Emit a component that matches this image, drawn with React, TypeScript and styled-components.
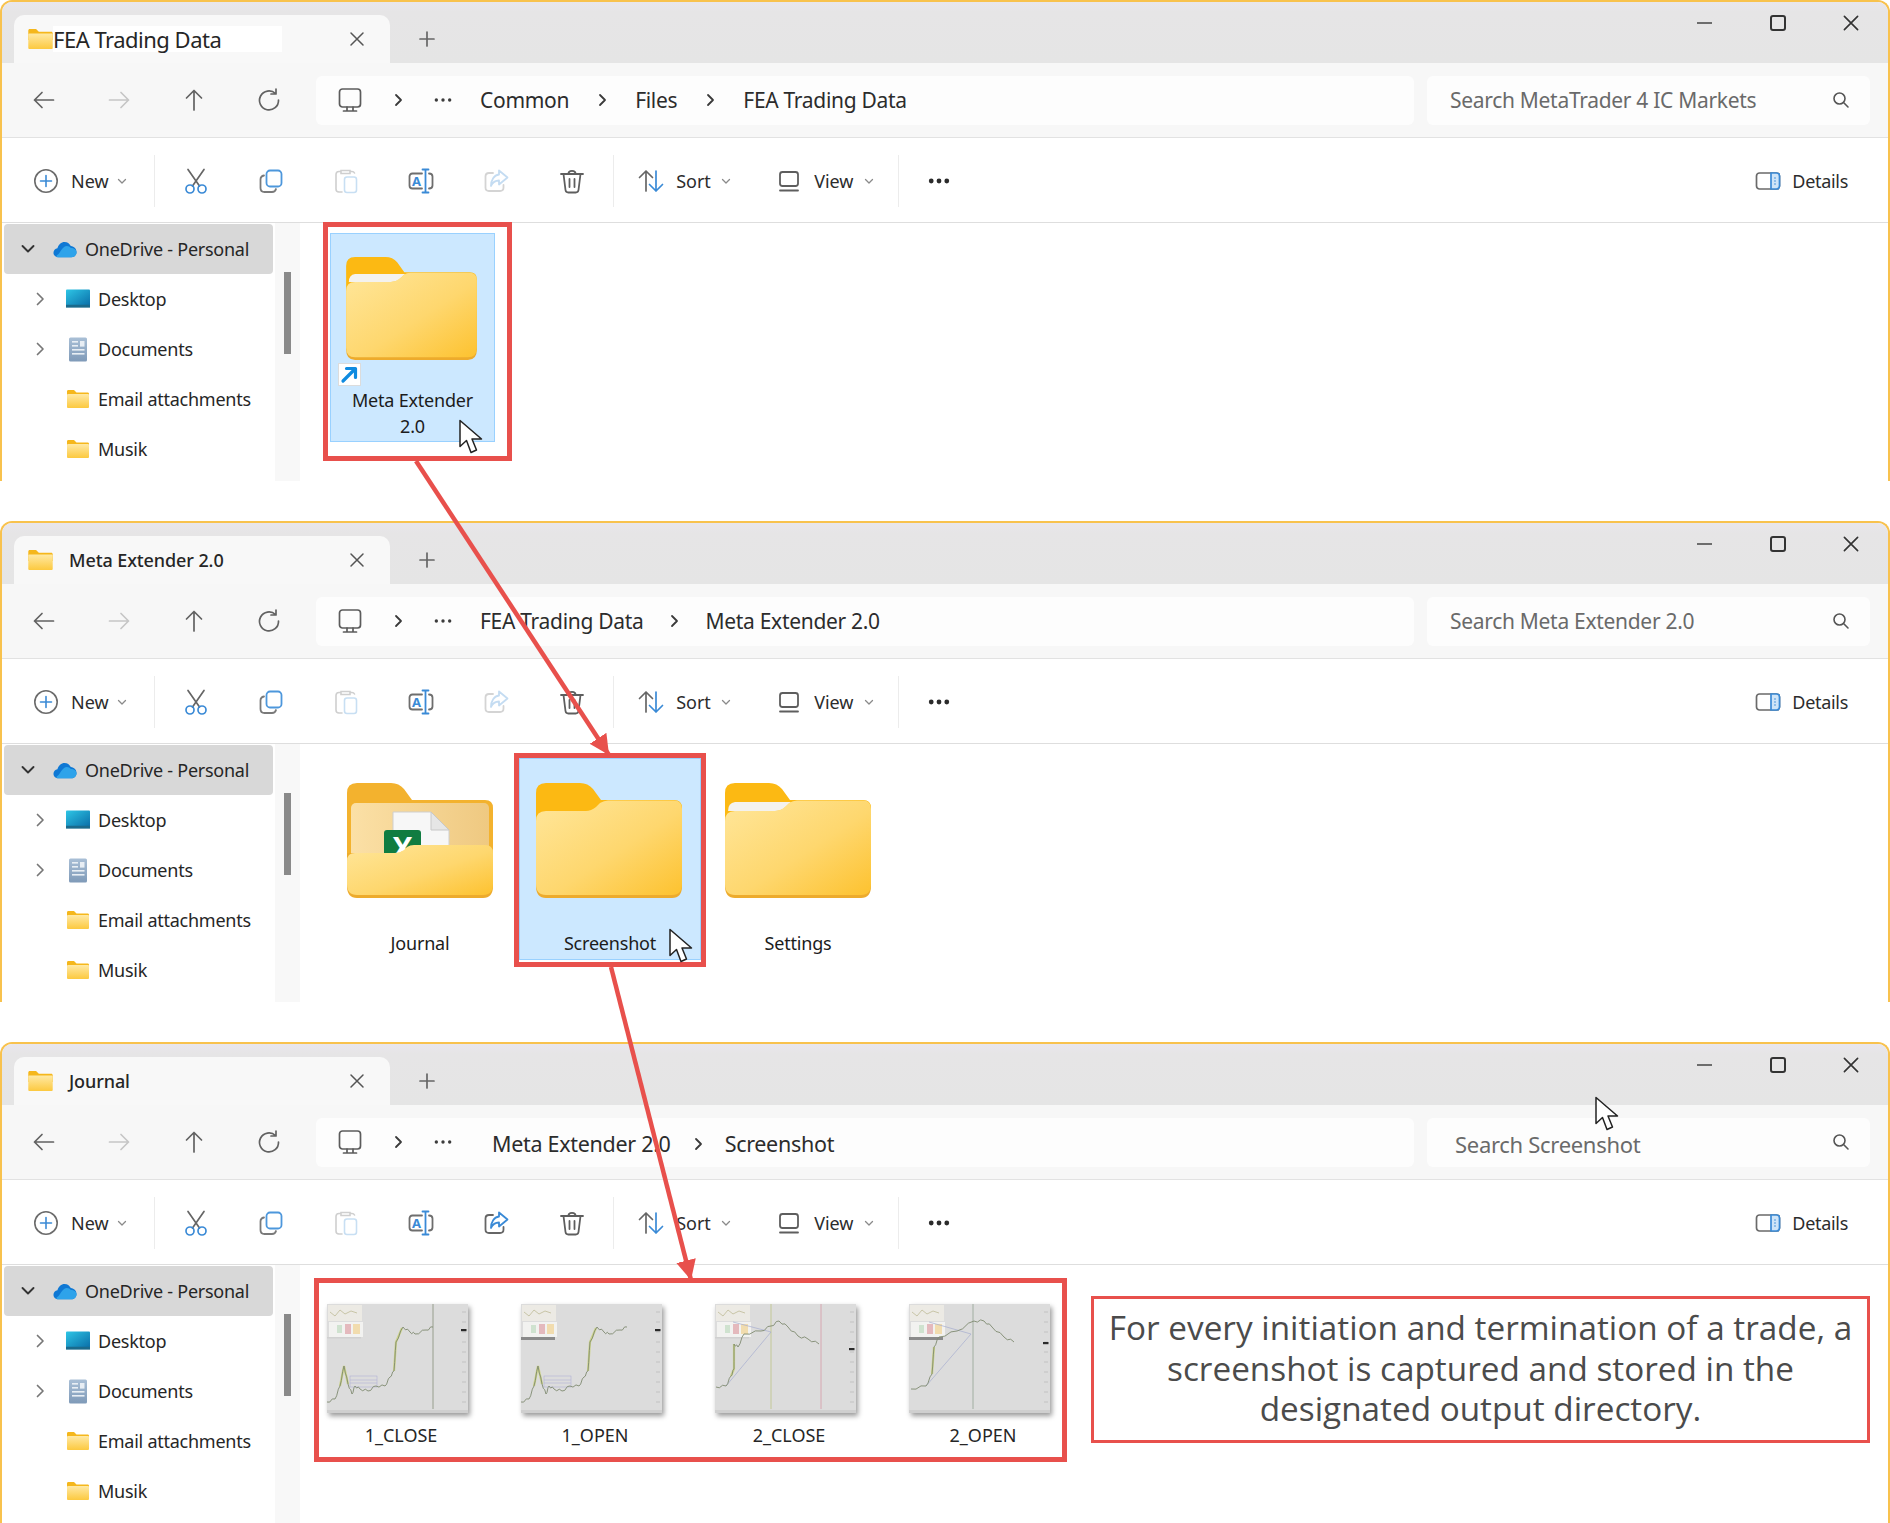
import React from 'react';
import styled, { createGlobalStyle } from 'styled-components';

const RED = '#e8504c';
const UI_FONT = '"Noto Sans", "Open Sans", "Liberation Sans", sans-serif';

const GlobalStyle = createGlobalStyle`
  html, body {
    margin: 0;
    padding: 0;
    background: #fff;
  }
  body {
    font-family: ${UI_FONT};
    color: #2a2a2a;
  }
`;

const Page = styled.div`
  position: relative;
  width: 1890px;
  height: 1523px;
  display: flex;
  flex-direction: column;
  gap: 40px;
  overflow: hidden;
  background: #fff;
`;

const ArrowLayer = styled.svg`
  position: absolute;
  inset: 0;
  z-index: 5;
  pointer-events: none;
`;

const Window = styled.section`
  position: relative;
  box-sizing: border-box;
  height: 481px;
  flex-shrink: 0;
  display: flex;
  flex-direction: column;
  overflow: hidden;
  border: 2px solid #f8c24e;
  border-bottom: 0;
  border-radius: 12px 12px 0 0;
  background: #fff;
`;

const TabStrip = styled.header`
  height: 61px;
  flex-shrink: 0;
  display: flex;
  background: linear-gradient(#e9e6ec 0, #e6e5e6 10px, #e5e5e5 100%);
`;

const Tab = styled.div`
  box-sizing: border-box;
  width: 376px;
  height: 48px;
  margin: 13px 0 0 12px;
  padding-left: 14px;
  display: flex;
  align-items: center;
  background: #f8f8f8;
  border-radius: 10px 10px 0 0;
`;

const TabTitle = styled.span<{ $pasted?: boolean }>`
  flex: 1;
  font-size: ${(p) => (p.$pasted ? '22px' : '18px')};
  font-weight: ${(p) => (p.$pasted ? 400 : 500)};
  letter-spacing: ${(p) => (p.$pasted ? '-0.5px' : '-0.1px')};
  color: #262626;
  white-space: nowrap;
  margin-left: ${(p) => (p.$pasted ? '0' : '16px')};
`;

const PastedLabel = styled.span`
  display: inline-block;
  width: 229px;
  height: 26px;
  line-height: 26px;
  background: #fff;
`;

const TabClose = styled.span`
  width: 20px;
  height: 20px;
  margin-right: 23px;
  display: flex;
`;

const NewTab = styled.span`
  margin: 13px 0 0 27px;
  height: 48px;
  display: flex;
  align-items: center;
`;

const WindowControls = styled.div`
  margin-left: auto;
  padding-right: 1px;
  display: flex;
`;

const WindowButton = styled.span`
  width: 73px;
  height: 42px;
  display: flex;
  align-items: center;
  justify-content: center;
`;

const NavBar = styled.nav`
  box-sizing: border-box;
  height: 75px;
  flex-shrink: 0;
  padding-left: 4px;
  display: flex;
  align-items: center;
  background: #f7f7f7;
  border-bottom: 1px solid #e2e2e2;
`;

const NavButton = styled.span`
  width: 75px;
  display: flex;
  justify-content: center;
`;

const AddressBar = styled.div`
  box-sizing: border-box;
  width: 1098px;
  height: 49px;
  margin-left: 10px;
  padding-left: 20px;
  display: flex;
  align-items: center;
  background: #fdfdfd;
  border-radius: 6px;
`;

const AddressChevron = styled.span`
  margin-left: 25px;
  display: flex;
`;

const AddressMore = styled.span`
  margin-left: 24px;
  width: 24px;
  display: flex;
  justify-content: center;
`;

const Crumbs = styled.div<{ $lead: number; $gap: number; $large?: boolean }>`
  margin-left: ${(p) => p.$lead}px;
  padding-top: ${(p) => (p.$large ? '3px' : '0')};
  display: flex;
  align-items: center;
  gap: ${(p) => p.$gap}px;
  font-size: ${(p) => (p.$large ? '21.5px' : '21px')};
  letter-spacing: -0.3px;
  color: #2c2c2c;
  white-space: nowrap;
`;

const SearchBox = styled.div`
  box-sizing: border-box;
  width: 443px;
  height: 49px;
  margin-left: 13px;
  display: flex;
  align-items: center;
  justify-content: space-between;
  background: #fdfdfd;
  border-radius: 6px;
`;

const SearchText = styled.span<{ $inset: number; $large?: boolean }>`
  padding-left: ${(p) => p.$inset}px;
  padding-top: ${(p) => (p.$large ? '3px' : '0')};
  font-size: ${(p) => (p.$large ? '22px' : '21px')};
  letter-spacing: -0.3px;
  color: #6a6a6a;
  white-space: nowrap;
`;

const SearchGlyph = styled.span`
  margin-right: 19px;
  display: flex;
`;

const Toolbar = styled.div`
  box-sizing: border-box;
  height: 85px;
  flex-shrink: 0;
  padding-top: 2px;
  display: flex;
  align-items: center;
  background: #fff;
  border-bottom: 1px solid #dedede;
`;

const TextTool = styled.div<{ $width: number; $inset: number; $gap?: number; $caretPull?: number }>`
  box-sizing: border-box;
  width: ${(p) => p.$width}px;
  padding-left: ${(p) => p.$inset}px;
  flex-shrink: 0;
  display: flex;
  align-items: center;
  gap: ${(p) => p.$gap ?? 11}px;
  font-size: 18px;
  letter-spacing: 0;
  color: #2c2c2c;

  svg:last-child {
    margin-left: -${(p) => p.$caretPull ?? 0}px;
  }
`;

const IconTool = styled.span<{ $width?: number }>`
  width: ${(p) => p.$width ?? 75.2}px;
  flex-shrink: 0;
  display: flex;
  justify-content: center;
`;

const ToolDivider = styled.span<{ $before?: number; $after?: number }>`
  width: 1px;
  height: 52px;
  flex-shrink: 0;
  margin-left: ${(p) => p.$before ?? 0}px;
  margin-right: ${(p) => p.$after ?? 0}px;
  background: #ececec;
`;

const DetailsTool = styled.div`
  margin-left: auto;
  padding-right: 40px;
  display: flex;
  align-items: center;
  gap: 11px;
  font-size: 18px;
  letter-spacing: -0.3px;
  color: #2c2c2c;
`;

const Body = styled.div`
  flex: 1;
  min-height: 0;
  display: flex;
`;

const Sidebar = styled.aside`
  width: 273px;
  padding: 1px 0 0 2px;
  box-sizing: border-box;
  flex-shrink: 0;
  overflow: hidden;
`;

const SideRow = styled.div<{ $selected?: boolean; $inset: number }>`
  box-sizing: border-box;
  width: 269px;
  height: 50px;
  padding-left: ${(p) => p.$inset}px;
  display: flex;
  align-items: center;
  gap: 8px;
  font-size: 18px;
  letter-spacing: -0.25px;
  color: #262626;
  white-space: nowrap;
  border-radius: 4px;
  background: ${(p) => (p.$selected ? '#d8d8d8' : 'transparent')};
`;

const Twisty = styled.span<{ $after: number }>`
  width: 16px;
  height: 16px;
  flex-shrink: 0;
  margin-right: ${(p) => p.$after}px;
  display: flex;
`;

const SideIcon = styled.span`
  width: 24px;
  flex-shrink: 0;
  display: flex;
  justify-content: center;
`;

const Gutter = styled.div`
  width: 25px;
  flex-shrink: 0;
  background: #f8f8f8;
`;

const ScrollThumb = styled.div`
  width: 7px;
  height: 82px;
  margin: 49px 0 0 9px;
  background: #8a8a8a;
`;

const Content = styled.main<{ $inset: number }>`
  flex: 1;
  min-width: 0;
  padding-left: ${(p) => p.$inset}px;
  display: flex;
  align-items: flex-start;
`;

const RedFrame = styled.div<{ $mt: number; $pad: string; $ml?: number; $mr?: number; $width?: number; $height?: number }>`
  box-sizing: border-box;
  flex-shrink: 0;
  width: ${(p) => (p.$width ? `${p.$width}px` : 'auto')};
  height: ${(p) => (p.$height ? `${p.$height}px` : 'auto')};
  margin: ${(p) => p.$mt}px ${(p) => p.$mr ?? 0}px 0 ${(p) => p.$ml ?? 0}px;
  padding: ${(p) => p.$pad};
  border: 5px solid ${RED};
`;

const Tile = styled.div<{ $width: number; $height: number; $top: number; $selected?: boolean; $mt?: number }>`
  position: relative;
  box-sizing: border-box;
  width: ${(p) => p.$width}px;
  height: ${(p) => p.$height}px;
  margin-top: ${(p) => p.$mt ?? 0}px;
  padding-top: ${(p) => p.$top}px;
  flex-shrink: 0;
  display: flex;
  flex-direction: column;
  align-items: center;
  background: ${(p) => (p.$selected ? '#cce8ff' : 'transparent')};
  border: 1px solid ${(p) => (p.$selected ? '#99d1ff' : 'transparent')};
`;

const FolderSlot = styled.span<{ $shift?: number }>`
  display: flex;
  margin-left: ${(p) => p.$shift ?? 0}px;
`;

const TileLabel = styled.div<{ $gap: number }>`
  margin-top: ${(p) => p.$gap}px;
  font-size: 18px;
  line-height: 26px;
  letter-spacing: -0.2px;
  text-align: center;
  color: #1c1c1c;
`;

const ShortcutBadge = styled.span`
  position: absolute;
  left: 7px;
  top: 129px;
  width: 23px;
  height: 23px;
  display: flex;
  background: #fff;
  border: 1px solid #dcdcdc;
  box-sizing: border-box;
`;

const CursorSpot = styled.span<{ $left: number; $top: number }>`
  position: absolute;
  left: ${(p) => p.$left}px;
  top: ${(p) => p.$top}px;
  display: flex;
  z-index: 6;
`;

const ThumbRow = styled.div`
  display: flex;
  gap: 53px;
`;

const ThumbItem = styled.div`
  width: 141px;
`;

const ThumbChart = styled.svg`
  display: block;
  width: 141px;
  height: 109px;
  box-shadow: 2px 3px 5px rgba(0, 0, 0, 0.4);
`;

const ThumbLabel = styled.div`
  margin-top: 9px;
  padding-left: 7px;
  font-size: 18px;
  line-height: 26px;
  letter-spacing: 0;
  text-align: center;
  color: #262626;
`;

const Note = styled.p`
  box-sizing: border-box;
  width: 779px;
  height: 147px;
  margin: 31px 0 0 24px;
  padding-top: 8px;
  flex-shrink: 0;
  border: 3px solid ${RED};
  font-family: 'Open Sans', sans-serif;
  font-size: 33.3px;
  line-height: 40.5px;
  text-align: center;
  color: #4b4b4b;
`;

/* ---- icons ---- */

type IconProps = { size?: number; color?: string };

const Line = ({ size = 28, color = '#626262', d }: IconProps & { d: string }) => (
  <svg width={size} height={size} viewBox="0 0 28 28" fill="none" stroke={color} strokeWidth={1.7} strokeLinecap="round" strokeLinejoin="round">
    <path d={d} />
  </svg>
);

const BackIcon = () => <Line d="M23.5 14H4.5M12 6.5L4.5 14L12 21.5" />;
const ForwardIcon = () => <Line color="#c6c6c6" d="M4.5 14H23.5M16 6.5L23.5 14L16 21.5" />;
const UpIcon = () => <Line d="M14 24V4.5M6.5 12L14 4.5L21.5 12" />;
const RefreshIcon = () => <Line d="M20.5 7.5A9.5 9.5 0 1 0 23.5 14M21 3V8H16" />;
const Chevron = () => (
  <svg width={18} height={18} viewBox="0 0 18 18" fill="none" stroke="#3a3a3a" strokeWidth={1.8} strokeLinecap="round" strokeLinejoin="round">
    <path d="M7 4L12 9L7 14" />
  </svg>
);
const CloseIcon = ({ size = 20, color = '#555' }: IconProps) => (
  <svg width={size} height={size} viewBox="0 0 20 20" fill="none" stroke={color} strokeWidth={1.5} strokeLinecap="round">
    <path d="M4 4L16 16M16 4L4 16" />
  </svg>
);
const PlusIcon = () => (
  <svg width={20} height={20} viewBox="0 0 20 20" fill="none" stroke="#666" strokeWidth={1.7} strokeLinecap="round">
    <path d="M10 3V17M3 10H17" />
  </svg>
);
const MinimizeIcon = () => (
  <svg width={18} height={18} viewBox="0 0 18 18" fill="none" stroke="#444" strokeWidth={1.6}>
    <path d="M1 9H16" />
  </svg>
);
const MaximizeIcon = () => (
  <svg width={18} height={18} viewBox="0 0 18 18" fill="none" stroke="#333" strokeWidth={2}>
    <rect x="2" y="2" width="14" height="14" rx="2" />
  </svg>
);
const Dots = ({ size = 24, r = 1.7, color = '#3c3c3c' }: { size?: number; r?: number; color?: string }) => (
  <svg width={size} height={8} viewBox={`0 0 ${size} 8`} fill={color}>
    <circle cx={size / 2 - size / 3.6} cy="4" r={r} />
    <circle cx={size / 2} cy="4" r={r} />
    <circle cx={size / 2 + size / 3.6} cy="4" r={r} />
  </svg>
);
const MonitorIcon = () => (
  <svg width={28} height={28} viewBox="0 0 28 28" fill="none" stroke="#5c5c5c" strokeWidth={1.7} strokeLinecap="round" strokeLinejoin="round">
    <rect x="3.5" y="3" width="21" height="18" rx="3" />
    <path d="M11 21V24.5M17 21V24.5M7.5 25H20.5" />
  </svg>
);
const SearchIcon = () => (
  <svg width={20} height={20} viewBox="0 0 20 20" fill="none" stroke="#555" strokeWidth={1.6} strokeLinecap="round">
    <circle cx="8.5" cy="8.5" r="5.5" />
    <path d="M12.8 12.8L17 17" />
  </svg>
);
const NewIcon = () => (
  <svg width={26} height={26} viewBox="0 0 26 26" fill="none" strokeWidth={1.6} strokeLinecap="round">
    <circle cx="13" cy="13" r="11.2" stroke="#6b6b6b" />
    <path d="M13 7.5V18.5M7.5 13H18.5" stroke="#3a8ad6" />
  </svg>
);
const CaretDown = () => (
  <svg width={12} height={12} viewBox="0 0 12 12" fill="none" stroke="#8a8a8a" strokeWidth={1.3} strokeLinecap="round" strokeLinejoin="round">
    <path d="M2.5 4.5L6 8L9.5 4.5" />
  </svg>
);
const CutIcon = () => (
  <svg width={28} height={28} viewBox="0 0 28 28" fill="none" strokeWidth={1.7} strokeLinecap="round">
    <path d="M6 2.5L17.5 19M22 2.5L10.5 19" stroke="#666" />
    <circle cx="8" cy="22" r="4" stroke="#3a8ad6" />
    <circle cx="20" cy="22" r="4" stroke="#3a8ad6" />
  </svg>
);
const CopyIcon = () => (
  <svg width={28} height={28} viewBox="0 0 28 28" fill="none" strokeWidth={1.8} strokeLinecap="round">
    <path d="M7 8.5C4.5 9 3.5 10.5 3.5 12.5V21C3.5 23.5 5 25 7.5 25H15C17 25 18.5 24 19 22" stroke="#7a7a7a" />
    <rect x="9.5" y="3.5" width="15" height="16" rx="3.5" stroke="#4d97dc" />
  </svg>
);
const PasteIcon = () => (
  <svg width={28} height={28} viewBox="0 0 28 28" fill="none" strokeWidth={1.6} strokeLinecap="round">
    <path d="M9 4.5H7C5 4.5 4 6 4 7.5V22C4 24 5 25 7 25H10M18 4.5H20C21 4.5 22 5 22.5 6M9 3.5H18V6.5H9Z" stroke="#cfcfcf" />
    <rect x="12.5" y="10" width="12" height="15.5" rx="2.5" stroke="#c8dff3" />
  </svg>
);
const RenameIcon = () => (
  <svg width={28} height={28} viewBox="0 0 28 28" fill="none" strokeWidth={1.8} strokeLinecap="round">
    <path d="M15 6.5H5.5C3.5 6.5 2.5 8 2.5 9.5V18.5C2.5 20 3.5 21.5 5.5 21.5H15M22 6.5C24.5 6.5 25.5 8 25.5 9.5V18.5C25.5 20 24.5 21.5 22 21.5" stroke="#6e6e6e" />
    <path d="M18.5 3V25M15.5 2.5H21.5M15.5 25.5H21.5" stroke="#3a8ad6" />
    <text x="9.6" y="18.6" textAnchor="middle" fontSize="13" fontWeight="700" fontFamily="Noto Sans, sans-serif" fill="#3a8ad6" stroke="none">A</text>
  </svg>
);
const ShareIcon = ({ dim }: { dim: boolean }) => (
  <svg width={28} height={28} viewBox="0 0 28 28" fill="none" strokeWidth={1.8} strokeLinecap="round" strokeLinejoin="round">
    <path d="M11 6H7C5 6 3.5 7.5 3.5 9.5V20.5C3.5 22.5 5 24 7 24H18C20 24 21.5 22.5 21.5 20.5V18" stroke={dim ? '#d4d4d4' : '#666'} />
    <path d="M17 3.5L25.5 10.5L17 17.5V13.5C13 13.5 10.5 15.5 9 19C9 13 12 8 17 7.5Z" stroke={dim ? '#c4dcf2' : '#3a8ad6'} />
  </svg>
);
const TrashIcon = () => (
  <svg width={28} height={28} viewBox="0 0 28 28" fill="none" stroke="#5e5e5e" strokeWidth={1.8} strokeLinecap="round" strokeLinejoin="round">
    <path d="M3 7H25M10.5 6.5C10.5 3 17.5 3 17.5 6.5M5.5 7L7.5 23C7.7 24.5 8.8 25.5 10.3 25.5H17.7C19.2 25.5 20.3 24.5 20.5 23L22.5 7M11.5 12V20M16.5 12V20" />
  </svg>
);
const SortIcon = () => (
  <svg width={28} height={28} viewBox="0 0 28 28" fill="none" strokeWidth={1.7} strokeLinecap="round" strokeLinejoin="round">
    <path d="M9 24V4M2.5 10.5L9 4L15.5 10.5" stroke="#666" />
    <path d="M19 4V24M12.5 17.5L19 24L25.5 17.5" stroke="#3a8ad6" />
  </svg>
);
const ViewIcon = () => (
  <svg width={24} height={24} viewBox="0 0 24 24" fill="none" stroke="#5e5e5e" strokeWidth={1.8} strokeLinecap="round">
    <rect x="3" y="3" width="18" height="14" rx="2.5" />
    <path d="M3 21.5H21" />
  </svg>
);
const DetailsIcon = () => (
  <svg width={26} height={22} viewBox="0 0 26 22" fill="none" strokeWidth={1.7}>
    <rect x="1.5" y="3" width="23" height="16" rx="3" stroke="#6a6a6a" />
    <path d="M16 3H21.5C23.2 3 24.5 4.3 24.5 6V16C24.5 17.7 23.2 19 21.5 19H16Z" fill="#cfe5f8" stroke="#3a8ad6" />
    <path d="M20 7.5V8.5M20 10.5V11.5M20 13.5V14.5" stroke="#3a8ad6" />
  </svg>
);
const SideChevron = () => (
  <svg width={16} height={16} viewBox="0 0 16 16" fill="none" stroke="#777" strokeWidth={1.7} strokeLinecap="round" strokeLinejoin="round">
    <path d="M5.5 2.5L11 8L5.5 13.5" />
  </svg>
);
const SideChevronDown = () => (
  <svg width={16} height={16} viewBox="0 0 16 16" fill="none" stroke="#333" strokeWidth={1.9} strokeLinecap="round" strokeLinejoin="round">
    <path d="M2.5 5L8 10.5L13.5 5" />
  </svg>
);
const CloudIcon = () => (
  <svg width={27} height={19} viewBox="0 0 26 18">
    <path d="M6 17.5C2.5 17.5 0.5 15 0.5 12.5C0.5 10 2.3 8 4.8 7.6C5.8 3.5 9 0.8 12.5 0.8C15.5 0.8 18 2.5 19.3 5.2C23 5.5 25.5 8.5 25.5 11.7C25.5 15 23 17.5 19.8 17.5Z" fill="#0f78d4" />
    <path d="M12 6.2C14 4.6 18 5 19.3 7.5C23 7.6 25.5 9.5 25.5 12.2C25.5 15 23 17.5 19.8 17.5H6C3 17.5 3 16 6 14C8 11.5 9.5 8 12 6.2Z" fill="#2ea3ea" />
  </svg>
);
const DesktopIcon = () => (
  <svg width={25} height={20} viewBox="0 0 25 20">
    <defs>
      <linearGradient id="desk" x1="0" y1="0" x2="1" y2="1">
        <stop offset="0" stopColor="#2ec6e6" />
        <stop offset="1" stopColor="#0a6ea8" />
      </linearGradient>
    </defs>
    <rect x="0" y="0" width="25" height="17" rx="1" fill="url(#desk)" />
    <rect x="0" y="16" width="25" height="3" fill="#1a6a8c" />
  </svg>
);
const DocumentsIcon = () => (
  <svg width={20} height={25} viewBox="0 0 20 25">
    <defs>
      <linearGradient id="docs" x1="0" y1="0" x2="0" y2="1">
        <stop offset="0" stopColor="#a9bfd6" />
        <stop offset="1" stopColor="#7f9ab8" />
      </linearGradient>
    </defs>
    <rect x="1" y="0.5" width="18" height="24" rx="1.5" fill="url(#docs)" />
    <rect x="4" y="4" width="6" height="1.6" fill="#e8eef4" />
    <rect x="4" y="8" width="6" height="1.6" fill="#e8eef4" />
    <rect x="12" y="4" width="4.5" height="5.6" fill="#e8eef4" />
    <rect x="4" y="12" width="12.5" height="1.6" fill="#e8eef4" />
    <rect x="4" y="16" width="12.5" height="1.6" fill="#e8eef4" />
  </svg>
);
const SmallFolder = ({ w = 22, h = 18 }: { w?: number; h?: number }) => (
  <svg width={w} height={h} viewBox="0 0 22 18">
    <path d="M0 1.5C0 0.5 0.5 0 1.5 0H7L9.5 2.5H20.5C21.5 2.5 22 3 22 4V10H0Z" fill="#f5b71c" />
    <rect x="0" y="4" width="22" height="14" rx="1" fill="url(#smallFold)" />
    <defs>
      <linearGradient id="smallFold" x1="0" y1="0" x2="0" y2="1">
        <stop offset="0" stopColor="#ffe9a4" />
        <stop offset="1" stopColor="#fcc93f" />
      </linearGradient>
    </defs>
  </svg>
);

const FolderDefs = () => (
  <defs>
    <linearGradient id="folderFront" x1="0" y1="0" x2="1" y2="1">
      <stop offset="0" stopColor="#ffe69a" />
      <stop offset="0.55" stopColor="#fed76e" />
      <stop offset="1" stopColor="#fdc22f" />
    </linearGradient>
    <linearGradient id="folderInner" x1="0" y1="0" x2="1" y2="0">
      <stop offset="0" stopColor="#fbe0a6" />
      <stop offset="1" stopColor="#efc981" />
    </linearGradient>
  </defs>
);

const FolderBack = 'M0 10Q0 0 10 0H44Q52 0 57 6L65 17H138Q146 17 146 25V70H0Z';
const FolderFront = 'M0 38Q0 28 10 28H50Q55 28 60 24L64 20Q68 17.5 72 17.5H138Q146 17.5 146 26V101Q146 112 136 112H10Q0 112 0 101Z';

const FolderIcon = ({ width, height, paper }: { width: number; height: number; paper?: boolean }) => (
  <svg width={width} height={height} viewBox="0 0 146 115">
    <FolderDefs />
    <path d={FolderBack} fill="#fcb913" />
    <path d="M0 103V60H146V103Q146 115 136 115H10Q0 115 0 103Z" fill="#edab2c" />
    {paper && <path d="M3 28Q3 20 10 19H66L58 26Q55 28 50 28H3Z" fill="#f4f2ee" />}
    <path d={FolderFront} fill="url(#folderFront)" />
  </svg>
);

const FilledFolderIcon = () => (
  <svg width={146} height={115} viewBox="0 0 146 115">
    <FolderDefs />
    <path d={FolderBack} fill="#f3b22e" />
    <rect x="4" y="20" width="138" height="60" rx="5" fill="url(#folderInner)" />
    <path d="M46 29H84L102 47V80H46Z" fill="#f7f7f7" stroke="#cfcfcf" strokeWidth="1" />
    <path d="M84 29V47H102Z" fill="#e6e6e6" stroke="#c8c8c8" strokeWidth="1" />
    <rect x="37" y="47" width="37" height="40" rx="3" fill="#107c41" />
    <text x="55.5" y="76" textAnchor="middle" fontSize="30" fontWeight="700" fontFamily="Open Sans, sans-serif" fill="#fff">X</text>
    <path d="M0 103V70H146V103Q146 115 136 115H10Q0 115 0 103Z" fill="#edab2c" />
    <path d="M0 78Q0 70 8 70H48Q53 70 57 67L60 64Q63 62 67 62H138Q146 62 146 70V101Q146 112 136 112H10Q0 112 0 101Z" fill="url(#folderFront)" />
  </svg>
);

const ShortcutArrow = () => (
  <svg width={21} height={21} viewBox="0 0 21 21" fill="none" stroke="#0f8be0" strokeWidth={3.2} strokeLinecap="round" strokeLinejoin="round">
    <path d="M4 17L16 5M7.5 4.5H16.5V13.5" />
  </svg>
);

const PointerIcon = () => (
  <svg width={25} height={36} viewBox="0 0 25 36">
    <path d="M2 1.5V27.5L8.5 21.5L13 33.5L18.5 31L14 20H23.5Z" fill="#fff" stroke="#222" strokeWidth="1.5" strokeLinejoin="round" />
  </svg>
);

/* ---- chart thumbnails ---- */

type ChartData = {
  line: number[][];
  rises: string[];
  marks: { x: number; color: string }[];
  boxed?: boolean;
  diagonal?: string;
  axisY: number;
  darkPanel?: boolean;
};

// breaks each segment into small zigzags so the price line reads as candles
const jagged = (points: number[][]) =>
  points
    .flatMap(([x, y], i) => {
      const next = points[i + 1];
      if (!next) return [`${x},${y}`];
      return [0, 1, 2].map((k) => {
        const t = k / 3;
        const wobble = k === 0 ? 0 : k % 2 ? 1.1 : -1.1;
        return `${x + (next[0] - x) * t},${y + (next[1] - y) * t + wobble}`;
      });
    })
    .join(' ');

const AXIS_TICKS = [8, 18, 28, 38, 48, 58, 68, 78, 88, 98];

const Thumbnail = ({ chart }: { chart: ChartData }) => (
  <ThumbChart viewBox="0 0 141 109">
    <rect width="141" height="109" fill="#dcdcdc" />
    <rect x="1" y="1" width="34" height="16" fill="#eceae4" />
    <path d="M3 8L8 12L13 6L18 10L24 7L30 9" stroke="#b9b48c" strokeWidth="0.7" fill="none" />
    <rect x="2" y="18" width="34" height="15" fill="#f2f2f0" />
    <rect x="10" y="21" width="5" height="8" fill="#cfe2cf" />
    <rect x="18" y="20" width="6" height="10" fill="#e4b9bd" />
    <rect x="26" y="20" width="7" height="10" fill="#f1dcae" />
    <rect x="0" y="33" width="34" height={chart.darkPanel ? 3 : 1.5} fill={chart.darkPanel ? '#8a8a8a' : '#d0d0d0'} />
    {chart.marks.map((m) => (
      <line key={m.x} x1={m.x} x2={m.x} y1="0" y2="105" stroke={m.color} strokeWidth="0.9" />
    ))}
    {chart.boxed && (
      <g fill="none" stroke="#a8a8d4" strokeWidth="0.5">
        <rect x="23" y="72" width="27" height="11" />
        <path d="M23 76H50M23 79H50" />
      </g>
    )}
    {chart.diagonal && <polyline points={chart.diagonal} fill="none" stroke="#a6aed0" strokeWidth="0.7" />}
    {chart.rises.map((r) => (
      <polyline key={r} points={r} fill="none" stroke="#cdd38a" strokeWidth="2.2" />
    ))}
    <polyline points={jagged(chart.line)} fill="none" stroke="#7f8a70" strokeWidth="0.9" strokeLinejoin="round" />
    <g stroke="#b4b4b4" strokeWidth="0.6">
      {AXIS_TICKS.map((y) => (
        <line key={y} x1="135" x2="139" y1={y} y2={y} />
      ))}
    </g>
    <rect x="134" y={chart.axisY} width="5.5" height="2.2" fill="#2a2a2a" />
    <rect x="0" y="106" width="141" height="3" fill="#cfcfcf" />
  </ThumbChart>
);

const PEAK_LINE = [
  [0, 98], [8, 95], [13, 82], [17, 62], [21, 80], [25, 90], [28, 82], [33, 85], [41, 87], [49, 82],
  [58, 82], [63, 73], [67, 67], [69, 38], [76, 23], [83, 28], [88, 30], [99, 26], [106, 23],
];

const THUMBS: { name: string; chart: ChartData }[] = [
  {
    name: '1_CLOSE',
    chart: {
      line: PEAK_LINE,
      rises: ['13,82 17,62 21,80', '67,67 69,38 75,24'],
      marks: [{ x: 106, color: '#8e9684' }],
      boxed: true,
      axisY: 25,
    },
  },
  {
    name: '1_OPEN',
    chart: {
      line: PEAK_LINE,
      rises: ['13,82 17,62 21,80', '67,67 69,38 75,24'],
      marks: [],
      boxed: true,
      axisY: 25,
      darkPanel: true,
    },
  },
  {
    name: '2_CLOSE',
    chart: {
      line: [[1, 83], [11, 82], [16, 72], [19, 65], [19, 40], [23, 43], [29, 30], [46, 27], [56, 22], [64, 17], [73, 23], [83, 32], [93, 35], [104, 40]],
      rises: ['16,72 19,65 19,40'],
      marks: [
        { x: 56, color: '#bfc58f' },
        { x: 106, color: '#d6a0ac' },
      ],
      diagonal: '11,82 56,28 18,18',
      axisY: 44,
    },
  },
  {
    name: '2_OPEN',
    chart: {
      line: [[2, 85], [17, 82], [23, 70], [25, 43], [30, 33], [48, 27], [65, 17], [75, 17], [83, 23], [95, 33], [105, 38]],
      rises: ['23,70 25,43'],
      marks: [{ x: 64, color: '#9aa89a' }],
      diagonal: '17,82 62,30 20,18',
      axisY: 38,
      darkPanel: true,
    },
  },
];

/* ---- shared chrome ---- */

const SIDE_ITEMS = [
  { name: 'Desktop', icon: <DesktopIcon />, expandable: true },
  { name: 'Documents', icon: <DocumentsIcon />, expandable: true },
  { name: 'Email attachments', icon: <SmallFolder />, expandable: false },
  { name: 'Musik', icon: <SmallFolder />, expandable: false },
];

const SideNav = () => (
  <>
    <Sidebar>
      <SideRow $selected $inset={16}>
        <Twisty $after={9}>
          <SideChevronDown />
        </Twisty>
        <SideIcon>
          <CloudIcon />
        </SideIcon>
        OneDrive - Personal
      </SideRow>
      {SIDE_ITEMS.map((item) => (
        <SideRow key={item.name} $inset={28}>
          <Twisty $after={10}>{item.expandable && <SideChevron />}</Twisty>
          <SideIcon>{item.icon}</SideIcon>
          {item.name}
        </SideRow>
      ))}
    </Sidebar>
    <Gutter>
      <ScrollThumb />
    </Gutter>
  </>
);

type ChromeProps = {
  tabTitle: string;
  pastedTitle?: boolean;
  crumbs: string[];
  crumbLead: number;
  crumbGap: number;
  large?: boolean;
  search: string;
  searchInset: number;
  shareDim: boolean;
  children: React.ReactNode;
};

const ExplorerWindow = ({ tabTitle, pastedTitle, crumbs, crumbLead, crumbGap, large, search, searchInset, shareDim, children }: ChromeProps) => (
  <Window>
    <TabStrip>
      <Tab>
        <SmallFolder w={25} h={20} />
        <TabTitle $pasted={pastedTitle}>{pastedTitle ? <PastedLabel>{tabTitle}</PastedLabel> : tabTitle}</TabTitle>
        <TabClose>
          <CloseIcon />
        </TabClose>
      </Tab>
      <NewTab>
        <PlusIcon />
      </NewTab>
      <WindowControls>
        <WindowButton>
          <MinimizeIcon />
        </WindowButton>
        <WindowButton>
          <MaximizeIcon />
        </WindowButton>
        <WindowButton>
          <CloseIcon size={22} color="#333" />
        </WindowButton>
      </WindowControls>
    </TabStrip>

    <NavBar>
      <NavButton>
        <BackIcon />
      </NavButton>
      <NavButton>
        <ForwardIcon />
      </NavButton>
      <NavButton>
        <UpIcon />
      </NavButton>
      <NavButton>
        <RefreshIcon />
      </NavButton>
      <AddressBar>
        <MonitorIcon />
        <AddressChevron>
          <Chevron />
        </AddressChevron>
        <AddressMore>
          <Dots />
        </AddressMore>
        <Crumbs $lead={crumbLead} $gap={crumbGap} $large={large}>
          {crumbs.map((crumb, i) => (
            <React.Fragment key={crumb}>
              {i > 0 && <Chevron />}
              <span>{crumb}</span>
            </React.Fragment>
          ))}
        </Crumbs>
      </AddressBar>
      <SearchBox>
        <SearchText $inset={searchInset} $large={large}>
          {search}
        </SearchText>
        <SearchGlyph>
          <SearchIcon />
        </SearchGlyph>
      </SearchBox>
    </NavBar>

    <Toolbar>
      <TextTool $width={152} $inset={31} $gap={12} $caretPull={5}>
        <NewIcon />
        New
        <CaretDown />
      </TextTool>
      <ToolDivider $after={3} />
      <IconTool>
        <CutIcon />
      </IconTool>
      <IconTool>
        <CopyIcon />
      </IconTool>
      <IconTool>
        <PasteIcon />
      </IconTool>
      <IconTool>
        <RenameIcon />
      </IconTool>
      <IconTool>
        <ShareIcon dim={shareDim} />
      </IconTool>
      <IconTool>
        <TrashIcon />
      </IconTool>
      <ToolDivider $before={4} />
      <TextTool $width={150} $inset={23} $caretPull={2}>
        <SortIcon />
        Sort
        <CaretDown />
      </TextTool>
      <TextTool $width={134} $inset={13} $gap={13} $caretPull={4}>
        <ViewIcon />
        View
        <CaretDown />
      </TextTool>
      <ToolDivider />
      <IconTool $width={79}>
        <Dots size={28} r={2.4} color="#2b2b2b" />
      </IconTool>
      <DetailsTool>
        <DetailsIcon />
        Details
      </DetailsTool>
    </Toolbar>

    <Body>
      <SideNav />
      {children}
    </Body>
  </Window>
);

export default function App() {
  return (
    <Page>
      <GlobalStyle />

      <ExplorerWindow
        tabTitle="FEA Trading Data"
        pastedTitle
        crumbs={['Common', 'Files', 'FEA Trading Data']}
        crumbLead={25}
        crumbGap={24}
        search="Search MetaTrader 4 IC Markets"
        searchInset={23}
        shareDim
      >
        <Content $inset={23}>
          <RedFrame $mt={-1} $pad="6px 12px 14px 2px">
            <Tile $width={165} $height={209} $top={23} $selected>
              <FolderSlot $shift={-2}>
                <FolderIcon width={131} height={103} paper />
              </FolderSlot>
              <ShortcutBadge>
                <ShortcutArrow />
              </ShortcutBadge>
              <TileLabel $gap={27}>
                Meta Extender
                <br />
                2.0
              </TileLabel>
              <CursorSpot $left={127} $top={185}>
                <PointerIcon />
              </CursorSpot>
            </Tile>
          </RedFrame>
        </Content>
      </ExplorerWindow>

      <ExplorerWindow
        tabTitle="Meta Extender 2.0"
        crumbs={['FEA Trading Data', 'Meta Extender 2.0']}
        crumbLead={25}
        crumbGap={22}
        search="Search Meta Extender 2.0"
        searchInset={23}
        shareDim
      >
        <Content $inset={29}>
          <Tile $width={182} $height={202} $top={24} $mt={14}>
            <FilledFolderIcon />
            <TileLabel $gap={32}>Journal</TileLabel>
          </Tile>
          <RedFrame $mt={9} $pad="0 0 2px 0" $ml={3} $mr={1}>
            <Tile $width={182} $height={202} $top={24} $selected>
              <FolderSlot $shift={-3}>
                <FolderIcon width={146} height={115} />
              </FolderSlot>
              <TileLabel $gap={32}>Screenshot</TileLabel>
              <CursorSpot $left={148} $top={169}>
                <PointerIcon />
              </CursorSpot>
            </Tile>
          </RedFrame>
          <Tile $width={182} $height={202} $top={24} $mt={14}>
            <FolderIcon width={146} height={115} paper />
            <TileLabel $gap={32}>Settings</TileLabel>
          </Tile>
        </Content>
      </ExplorerWindow>

      <ExplorerWindow
        tabTitle="Journal"
        crumbs={['Meta Extender 2.0', 'Screenshot']}
        crumbLead={37}
        crumbGap={18}
        large
        search="Search Screenshot"
        searchInset={28}
        shareDim={false}
      >
        <Content $inset={14}>
          <RedFrame $mt={13} $pad="21px 0 0 8px" $width={753} $height={184}>
            <ThumbRow>
              {THUMBS.map((thumb) => (
                <ThumbItem key={thumb.name}>
                  <Thumbnail chart={thumb.chart} />
                  <ThumbLabel>{thumb.name}</ThumbLabel>
                </ThumbItem>
              ))}
            </ThumbRow>
          </RedFrame>
          <Note>
            For every initiation and termination of a trade, a screenshot is captured and stored in the designated output directory.
          </Note>
        </Content>
        <CursorSpot $left={1592} $top={52}>
          <PointerIcon />
        </CursorSpot>
      </ExplorerWindow>

      <ArrowLayer viewBox="0 0 1890 1523" width="1890" height="1523">
        <defs>
          <marker id="arrowHead" markerUnits="userSpaceOnUse" markerWidth="22" markerHeight="22" refX="20" refY="10" orient="auto">
            <path d="M0 0L20 10L0 20Z" fill={RED} />
          </marker>
        </defs>
        <line x1="416" y1="461" x2="609" y2="755" stroke={RED} strokeWidth="4.5" markerEnd="url(#arrowHead)" />
        <line x1="611" y1="967" x2="691" y2="1280" stroke={RED} strokeWidth="4.5" markerEnd="url(#arrowHead)" />
      </ArrowLayer>
    </Page>
  );
}
